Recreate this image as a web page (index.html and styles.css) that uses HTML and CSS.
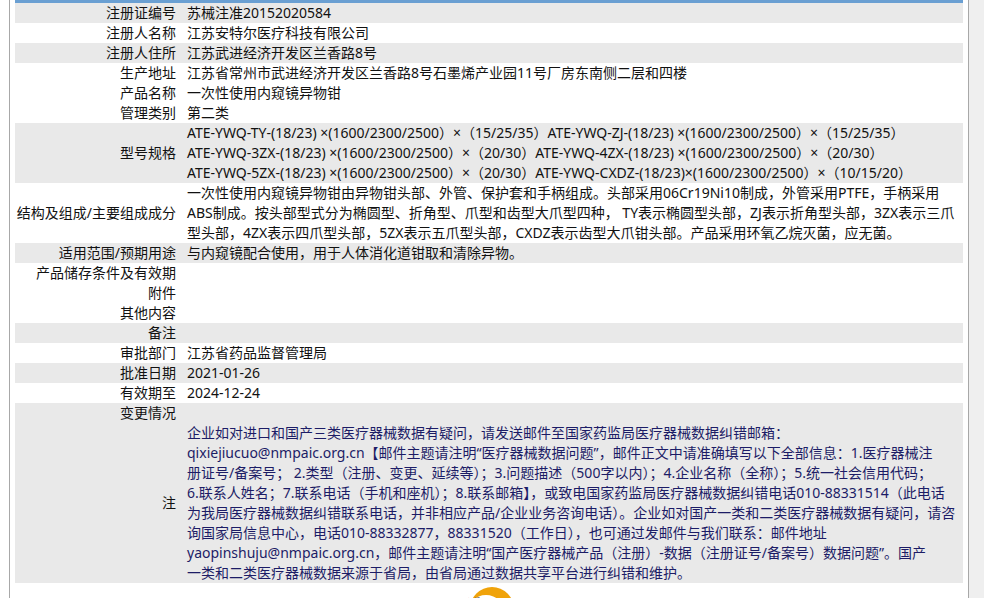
FILE: index.html
```html
<!DOCTYPE html>
<html lang="zh-CN">
<head>
<meta charset="utf-8">
<title>注册证信息</title>
<link rel="stylesheet" href="styles.css">
</head>
<body>
<div class="page">
  <div class="frame">
    <table class="info">
      <colgroup><col class="c-label"><col class="c-value"></colgroup>
      <tbody>
        <tr class="alt"><td class="label">注册证编号</td><td class="value">苏械注准20152020584</td></tr>
        <tr><td class="label">注册人名称</td><td class="value">江苏安特尔医疗科技有限公司</td></tr>
        <tr class="alt"><td class="label">注册人住所</td><td class="value">江苏武进经济开发区兰香路8号</td></tr>
        <tr><td class="label">生产地址</td><td class="value">江苏省常州市武进经济开发区兰香路8号石墨烯产业园11号厂房东南侧二层和四楼</td></tr>
        <tr><td class="label">产品名称</td><td class="value">一次性使用内窥镜异物钳</td></tr>
        <tr><td class="label">管理类别</td><td class="value">第二类</td></tr>
        <tr class="alt"><td class="label">型号规格</td><td class="value multi">ATE-YWQ-TY-(18/23) ×(1600/2300/2500）×（15/25/35）ATE-YWQ-ZJ-(18/23) ×(1600/2300/2500）×（15/25/35）<br>ATE-YWQ-3ZX-(18/23) ×(1600/2300/2500）×（20/30）ATE-YWQ-4ZX-(18/23) ×(1600/2300/2500）×（20/30）<br>ATE-YWQ-5ZX-(18/23) ×(1600/2300/2500）×（20/30）ATE-YWQ-CXDZ-(18/23)×(1600/2300/2500）×（10/15/20）</td></tr>
        <tr><td class="label">结构及组成/主要组成成分</td><td class="value multi">一次性使用内窥镜异物钳由异物钳头部、外管、保护套和手柄组成。头部采用06Cr19Ni10制成，外管采用PTFE，手柄采用<br>ABS制成。按头部型式分为椭圆型、折角型、爪型和齿型大爪型四种， TY表示椭圆型头部，ZJ表示折角型头部，3ZX表示三爪<br>型头部，4ZX表示四爪型头部，5ZX表示五爪型头部，CXDZ表示齿型大爪钳头部。产品采用环氧乙烷灭菌，应无菌。</td></tr>
        <tr class="alt"><td class="label">适用范围/预期用途</td><td class="value">与内窥镜配合使用，用于人体消化道钳取和清除异物。</td></tr>
        <tr><td class="label">产品储存条件及有效期</td><td class="value"></td></tr>
        <tr><td class="label">附件</td><td class="value"></td></tr>
        <tr><td class="label">其他内容</td><td class="value"></td></tr>
        <tr class="alt"><td class="label">备注</td><td class="value"></td></tr>
        <tr><td class="label">审批部门</td><td class="value">江苏省药品监督管理局</td></tr>
        <tr class="alt"><td class="label">批准日期</td><td class="value">2021-01-26</td></tr>
        <tr><td class="label">有效期至</td><td class="value">2024-12-24</td></tr>
        <tr class="alt"><td class="label">变更情况</td><td class="value"></td></tr>
        <tr class="alt"><td class="label">注</td><td class="value multi note">企业如对进口和国产三类医疗器械数据有疑问，请发送邮件至国家药监局医疗器械数据纠错邮箱：<br>qixiejiucuo@nmpaic.org.cn【邮件主题请注明“医疗器械数据问题”，邮件正文中请准确填写以下全部信息：1.医疗器械注<br>册证号/备案号； 2.类型（注册、变更、延续等）；3.问题描述（500字以内）；4.企业名称（全称）；5.统一社会信用代码；<br>6.联系人姓名；7.联系电话（手机和座机）；8.联系邮箱】，或致电国家药监局医疗器械数据纠错电话010-88331514（此电话<br>为我局医疗器械数据纠错联系电话，并非相应产品/企业业务咨询电话）。企业如对国产一类和二类医疗器械数据有疑问，请咨<br>询国家局信息中心，电话010-88332877，88331520（工作日），也可通过发邮件与我们联系：邮件地址<br>yaopinshuju@nmpaic.org.cn，邮件主题请注明“国产医疗器械产品（注册）-数据（注册证号/备案号）数据问题”。国产<br>一类和二类医疗器械数据来源于省局，由省局通过数据共享平台进行纠错和维护。</td></tr>
      </tbody>
    </table>
    <a class="back-top" href="#"><svg width="48" height="48" viewBox="0 0 48 48"><circle cx="26" cy="24" r="22" fill="#f0a30a"/><circle cx="20" cy="29" r="19" fill="#fff"/></svg><span class="back-text">返回</span></a>
  </div>
  <div class="side"></div>
</div>
</body>
</html>
```
FILE: styles.css
```css
html, body {
  margin: 0;
  padding: 0;
  background: #fff;
}
body {
  font-family: "Noto Sans", "Noto Sans CJK SC", sans-serif;
  font-size: 14px;
  color: #111;
  overflow: hidden;
}
.page {
  display: flex;
  height: 598px;
  padding-left: 9px;
}
.frame {
  position: relative;
  padding: 0 5px;
  box-sizing: border-box;
  width: 960px;
  border-left: 1px solid #a8a8a8;
  border-right: 1px solid #a8a8a8;
}
.side {
  flex: 1;
  background: #efefef;
}
.info {
  width: 948px;
  border-collapse: collapse;
  table-layout: fixed;
  border-top: 3px solid #6a9fd2;
}
.c-label { width: 166px; }
.c-value { width: 782px; }
.info td {
  padding: 0;
  line-height: 20px;
  height: 20px;
  vertical-align: middle;
}
.info tr.alt td {
  background: #e9e9e9;
}
.label {
  text-align: right;
  padding-right: 5px !important;
  white-space: nowrap;
}
.value {
  padding-left: 6px !important;
}
.multi {
  white-space: nowrap;
  overflow: hidden;
}
.note {
  color: #1c1c66;
}
.back-top {
  position: absolute;
  left: 456px;
  top: 585px;
  width: 48px;
  height: 48px;
  text-decoration: none;
}
.back-top svg {
  display: block;
}
.back-text {
  position: absolute;
  left: 1px;
  top: 8px;
  font-size: 14px;
  color: #333;
}
```
